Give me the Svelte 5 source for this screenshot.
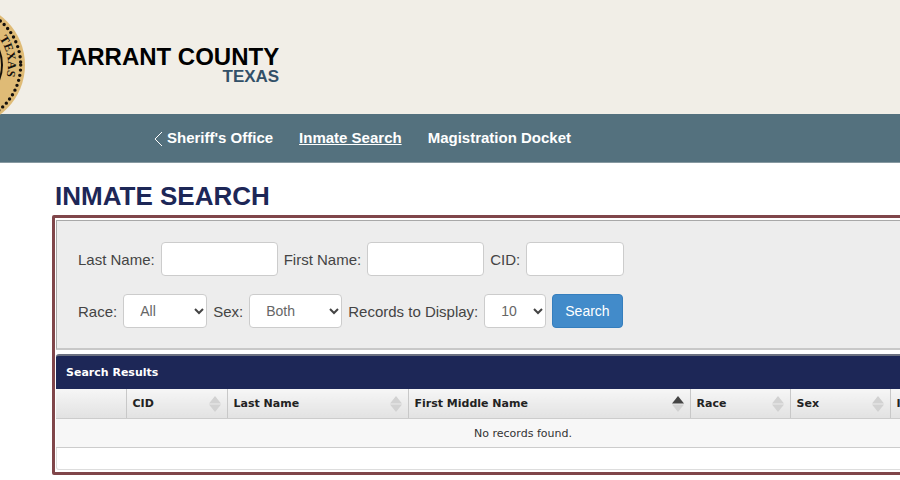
<script>
	const links = [
		{ label: "Sheriff's Office", back: true },
		{ label: 'Inmate Search', active: true },
		{ label: 'Magistration Docket' }
	]

	const columns = [
		{ label: '', width: 70 },
		{ label: 'CID', width: 101, sortable: true },
		{ label: 'Last Name', width: 181, sortable: true },
		{ label: 'First Middle Name', width: 282, sortable: true },
		{ label: 'Race', width: 100, sortable: true },
		{ label: 'Sex', width: 100, sortable: true },
		{ label: 'I', width: 100, sortable: true }
	]

	let sortBy = 'First Middle Name'
	let lastName = ''
	let firstName = ''
	let cid = ''

	const handleSort = (label) => () => (sortBy = label)
</script>

<div class="page">
	<header>
		<svg class="seal" width="26" height="118" viewBox="0 0 26 118" aria-hidden="true">
			<defs>
				<path id="ring" d="M -37 20 A 45 45 0 0 1 -37 110" />
			</defs>
			<circle cx="-37" cy="65" r="62" fill="#dfbb76" />
			<circle cx="-37" cy="65" r="57.7" fill="none" stroke="#15110c" stroke-width="3.4" stroke-linecap="round" stroke-dasharray="0 5.2" />
			<circle cx="-37" cy="65" r="39" fill="none" stroke="#15110c" stroke-width="2" />
			<circle cx="-37" cy="65" r="36" fill="none" stroke="#15110c" stroke-width="1" />
			<text><textPath href="#ring" startOffset="42">TEXAS</textPath></text>
		</svg>
		<div class="brand">
			<div class="county">TARRANT COUNTY</div>
			<div class="state">TEXAS</div>
		</div>
	</header>

	<nav>
		{#each links as link}
			<a href="#top" class="{link.active ? 'active' : ''}">
				{#if link.back}
					<svg width="9" height="16" viewBox="0 0 9 16" aria-hidden="true">
						<path d="M8 2 L1 9 L8 16" fill="none" stroke="#fff" />
					</svg>
				{/if}
				{link.label}
			</a>
		{/each}
	</nav>

	<main>
		<h1>INMATE SEARCH</h1>
		<div class="frame">
			<form on:submit|preventDefault>
				<div class="row">
					<label for="last">Last Name:</label>
					<input id="last" type="text" bind:value={lastName} />
					<label for="first">First Name:</label>
					<input id="first" type="text" bind:value={firstName} />
					<label for="cid">CID:</label>
					<input id="cid" class="short" type="text" bind:value={cid} />
				</div>
				<div class="row">
					<label for="race">Race:</label>
					<span class="select race">
						<select id="race"><option>All</option></select>
						<svg width="10" height="7" viewBox="0 0 10 7"><path d="M1 1 L5 5 L9 1" /></svg>
					</span>
					<label for="sex">Sex:</label>
					<span class="select sex">
						<select id="sex"><option>Both</option></select>
						<svg width="10" height="7" viewBox="0 0 10 7"><path d="M1 1 L5 5 L9 1" /></svg>
					</span>
					<label for="records">Records to Display:</label>
					<span class="select records">
						<select id="records"><option>10</option></select>
						<svg width="10" height="7" viewBox="0 0 10 7"><path d="M1 1 L5 5 L9 1" /></svg>
					</span>
					<button class="search" type="submit">Search</button>
				</div>
			</form>

			<div class="results">
				<h2>Search Results</h2>
				<table>
					<colgroup>
						{#each columns as column}
							<col style="width: {column.width}px" />
						{/each}
					</colgroup>
					<thead>
						<tr>
							{#each columns as column}
								<th>
									{#if column.sortable}
										<button class="sort" on:click={handleSort(column.label)}>
											{column.label}
											<svg class="{sortBy === column.label ? 'sorted' : ''}" width="12" height="16" viewBox="0 0 12 16" aria-hidden="true">
												<path class="up" d="M6 0 L12 7.5 H0 Z" />
												<path d="M6 16 L12 8.5 H0 Z" />
											</svg>
										</button>
									{/if}
								</th>
							{/each}
						</tr>
					</thead>
					<tbody>
						<tr>
							<td colspan={columns.length}>No records found.</td>
						</tr>
					</tbody>
				</table>
				<div class="footer"></div>
			</div>
		</div>
	</main>
</div>

<style>
	:global(body) {
		background: #fff;
	}
	.page {
		overflow: hidden;
		font-family: "Liberation Sans", Arial, sans-serif;
	}
	header {
		display: flex;
		align-items: flex-start;
		height: 114px;
		background: #f1eee7;
	}
	/* the seal hangs slightly over the nav bar */
	.seal {
		position: relative;
		flex: none;
	}
	.seal text {
		font: bold 12px "Liberation Serif", serif;
		fill: #15110c;
	}
	.brand {
		margin: 44px 0 0 31px;
		font-weight: bold;
		text-align: right;
	}
	.county {
		font-size: 24px;
		line-height: 26px;
		color: #000;
	}
	.state {
		font-size: 17px;
		line-height: 14px;
		color: #325068;
	}
	nav {
		display: flex;
		align-items: center;
		gap: 26px;
		height: 48px;
		padding-left: 154px;
		border-bottom: 1px solid #8799a1;
		background: #54717e;
	}
	nav a {
		display: flex;
		align-items: center;
		gap: 4px;
		font-size: 15px;
		font-weight: bold;
		line-height: 20px;
		color: #fff;
		text-decoration: none;
	}
	nav a.active {
		text-decoration: underline;
	}
	main {
		padding-left: 52px;
	}
	h1 {
		margin: 0 0 0 3px;
		padding: 18px 0 4px;
		font-size: 26px;
		line-height: 30px;
		color: #1d2757;
	}
	.frame {
		margin-right: -94px;
		padding: 2px 1px;
		border: 3px solid #80464a;
		border-radius: 2px;
	}
	form {
		display: flex;
		flex-direction: column;
		gap: 18px;
		padding: 21px 21px 20px;
		background: #ededed;
		border: 1px solid #a8a8a8;
		border-bottom: 2px solid #c8c8c8;
	}
	.row {
		display: flex;
		align-items: center;
		gap: 6px;
	}
	label {
		font-size: 15px;
		color: #444;
	}
	input,
	select {
		box-sizing: border-box;
		width: 117px;
		height: 34px;
		padding: 0 12px;
		border: 1px solid #ccc;
		border-radius: 4px;
		background: #fff;
		font-family: inherit;
		font-size: 14px;
		color: #666;
	}
	input.short {
		width: 98px;
	}
	.select {
		position: relative;
	}
	.select select {
		display: block;
		width: 100%;
		padding: 0 16px;
		appearance: none;
	}
	.select svg {
		position: absolute;
		top: 14px;
		right: 3px;
		pointer-events: none;
	}
	.select path {
		fill: none;
		stroke: #444;
		stroke-width: 2;
	}
	.race {
		width: 84px;
	}
	.sex {
		width: 93px;
	}
	.records {
		width: 62px;
	}
	.search {
		height: 34px;
		padding: 0 12px;
		border: 1px solid #357ebd;
		border-radius: 4px;
		background: #428bca;
		font-family: inherit;
		font-size: 14px;
		color: #fff;
	}
	.results {
		margin-top: 4px;
		font-family: Verdana, "DejaVu Sans", sans-serif;
		font-size: 11px;
	}
	h2 {
		margin: 0;
		padding: 0 10px;
		border-top: 2px solid #6b7080;
		border-radius: 3px 3px 0 0;
		background: #1d2757;
		font-size: 11px;
		line-height: 33px;
		color: #fff;
	}
	table {
		width: 100%;
		table-layout: fixed;
		border-collapse: collapse;
	}
	th {
		height: 29px;
		padding: 0 6px;
		border-right: 1px solid #c8c8c8;
		border-bottom: 1px solid #ccc;
		background: linear-gradient(#f6f6f6, #e2e2e2);
	}
	.sort {
		display: flex;
		align-items: center;
		justify-content: space-between;
		width: 100%;
		padding: 0;
		border: 0;
		background: none;
		font: inherit;
		color: #222;
		white-space: nowrap;
		cursor: pointer;
	}
	.sort path {
		fill: #d2d2d2;
	}
	.sort .sorted .up {
		fill: #444;
	}
	td {
		height: 28px;
		padding: 0;
		border-bottom: 1px solid #ccc;
		background: #f7f7f7;
		text-align: center;
		color: #333;
	}
	.footer {
		height: 21px;
		border: 1px solid #ddd;
		border-top: 0;
		border-radius: 0 0 3px 3px;
	}
</style>
